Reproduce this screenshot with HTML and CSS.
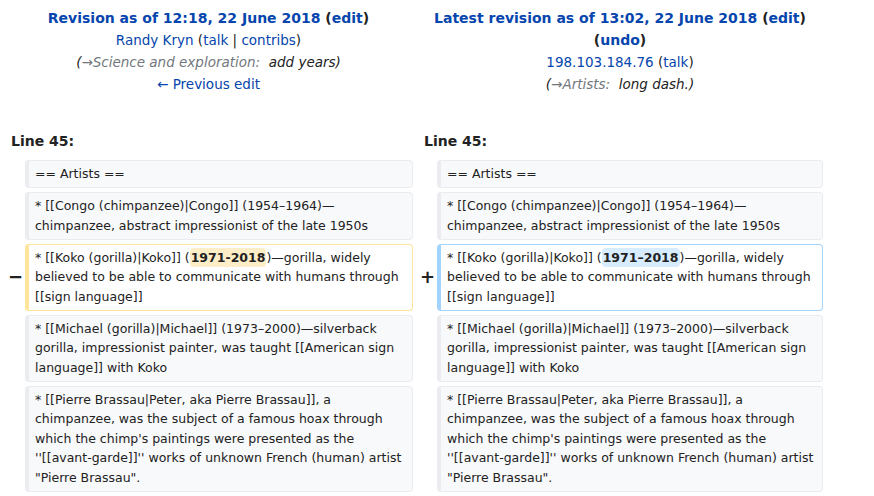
FILE: index.html
```html
<!DOCTYPE html>
<html>
<head>
<meta charset="utf-8">
<link rel="stylesheet" href="styles.css">
</head>
<body>
<div class="diff">
  <div class="title title-old">
    <div class="t-main"><a class="link">Revision as of 12:18, 22 June 2018</a> <span class="edit">(<a class="link">edit</a>)</span></div>
    <div class="t-line"><a class="link">Randy Kryn</a> (<a class="link">talk</a> | <a class="link">contribs</a>)</div>
    <div class="t-line comment">(<span class="auto">→Science and exploration:</span>&nbsp; add years)</div>
    <div class="t-line"><a class="link">← Previous edit</a></div>
  </div>
  <div class="title title-new">
    <div class="t-main"><a class="link">Latest revision as of 13:02, 22 June 2018</a> <span class="edit">(<a class="link">edit</a>)</span></div>
    <div class="t-main"><span class="edit">(<a class="link">undo</a>)</span></div>
    <div class="t-line"><a class="link">198.103.184.76</a> (<a class="link">talk</a>)</div>
    <div class="t-line comment">(<span class="auto">→Artists:</span>&nbsp; long dash.)</div>
  </div>

  <div class="lineno lineno-old">Line 45:</div>
  <div class="lineno lineno-new">Line 45:</div>

  <div class="marker"></div>
  <div class="cell context">== Artists ==</div>
  <div class="marker"></div>
  <div class="cell context">== Artists ==</div>

  <div class="marker"></div>
  <div class="cell context">* [[Congo (chimpanzee)|Congo]] (1954–1964)—chimpanzee, abstract impressionist of the late 1950s</div>
  <div class="marker"></div>
  <div class="cell context">* [[Congo (chimpanzee)|Congo]] (1954–1964)—chimpanzee, abstract impressionist of the late 1950s</div>

  <div class="marker"><span class="sign">−</span></div>
  <div class="cell deleted">* [[Koko (gorilla)|Koko]] (<del class="chg chg-del">1971-2018</del>)—gorilla, widely believed to be able to communicate with humans through [[sign language]]</div>
  <div class="marker"><span class="sign">+</span></div>
  <div class="cell added">* [[Koko (gorilla)|Koko]] (<ins class="chg chg-ins">1971–2018</ins>)—gorilla, widely believed to be able to communicate with humans through [[sign language]]</div>

  <div class="marker"></div>
  <div class="cell context">* [[Michael (gorilla)|Michael]] (1973–2000)—silverback gorilla, impressionist painter, was taught [[American sign language]] with Koko</div>
  <div class="marker"></div>
  <div class="cell context">* [[Michael (gorilla)|Michael]] (1973–2000)—silverback gorilla, impressionist painter, was taught [[American sign language]] with Koko</div>

  <div class="marker"></div>
  <div class="cell context">* [[Pierre Brassau|Peter, aka Pierre Brassau]], a chimpanzee, was the subject of a famous hoax through which the chimp's paintings were presented as the ''[[avant-garde]]'' works of unknown French (human) artist "Pierre Brassau".</div>
  <div class="marker"></div>
  <div class="cell context">* [[Pierre Brassau|Peter, aka Pierre Brassau]], a chimpanzee, was the subject of a famous hoax through which the chimp's paintings were presented as the ''[[avant-garde]]'' works of unknown French (human) artist "Pierre Brassau".</div>
</div>
</body>
</html>
```
FILE: styles.css
```css
html, body {
  margin: 0;
  padding: 0;
  background: #fff;
}
body {
  font-family: "DejaVu Sans", sans-serif;
  color: #222;
  font-size: 14px;
}
.diff {
  display: grid;
  grid-template-columns: 17px 388px 16px 386px;
  column-gap: 4px;
  row-gap: 4px;
  padding-left: 4px;
  padding-top: 7px;
}
.title {
  text-align: center;
  line-height: 22px;
  margin-bottom: 31px;
}
.title-old { grid-column: 1 / 3; }
.title-new { grid-column: 3 / 5; }
.t-main {
  font-weight: bold;
  font-size: 14px;
}
.t-line {
  font-size: 13.5px;
}
.link {
  color: #0645ad;
  text-decoration: none;
}
.edit { color: #222; }
.comment {
  font-style: italic;
  color: #222;
}
.auto {
  color: #72777d;
}
.lineno {
  font-weight: bold;
  font-size: 14px;
  line-height: 22px;
  padding-left: 7px;
  margin-bottom: 4px;
}
.lineno-old { grid-column: 1 / 3; }
.lineno-new { grid-column: 3 / 5; }
.marker {
  display: flex;
  align-items: center;
  justify-content: flex-end;
  font-weight: bold;
  font-size: 18px;
  line-height: 20px;
  color: #222;
}
.sign {
  margin-right: -2px;
}
.cell {
  font-size: 12.5px;
  line-height: 19.5px;
  padding: 3.25px 6px;
  border: 1px solid #eaecf0;
  border-left-width: 4px;
  border-radius: 4px;
  word-wrap: break-word;
}
.context {
  background: #f8f9fa;
  border-color: #eaecf0;
}
.deleted {
  background: #fff;
  border-color: #ffe49c;
}
.added {
  background: #fff;
  border-color: #a3d3ff;
}
.chg {
  display: inline-block;
  font-weight: bold;
  text-decoration: none;
  border-radius: 4px;
  padding: 0 1px;
  line-height: 19.5px;
  vertical-align: top;
}
.chg-del { background: #feeec8; }
.chg-ins { background: #d8ecff; }
```
